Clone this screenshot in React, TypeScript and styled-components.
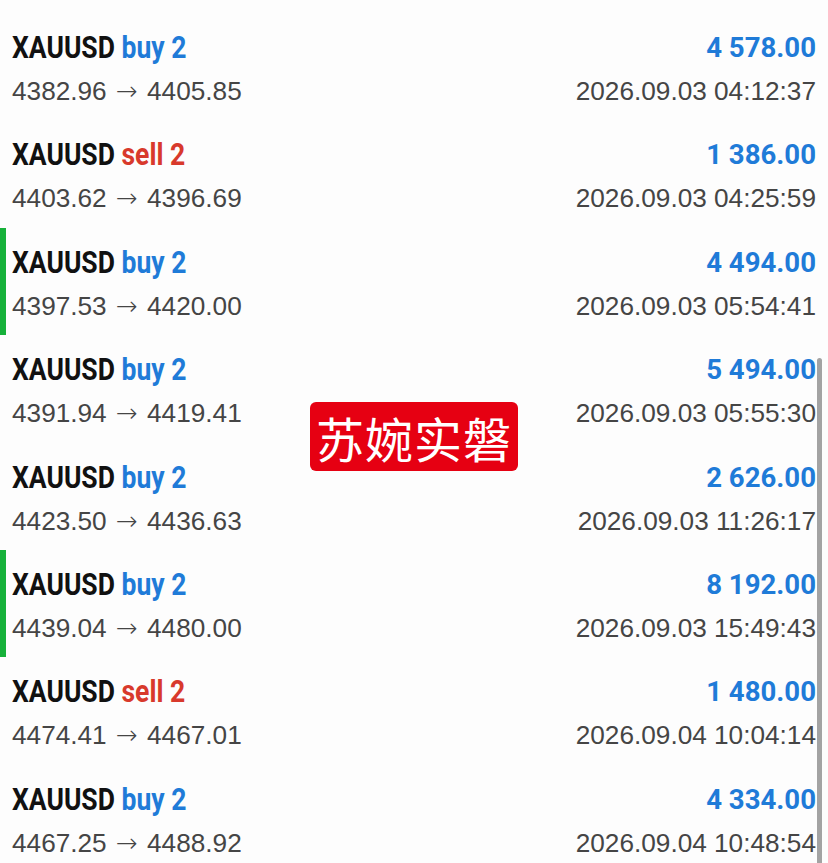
import React from "react";
import styled, { createGlobalStyle } from "styled-components";

const Global = createGlobalStyle`
  html, body { margin: 0; padding: 0; background: #ffffff; }
  body { font-family: "Liberation Sans", Arial, sans-serif; }
`;

const Page = styled.div`
  position: relative;
  width: 828px;
  height: 863px;
  overflow: hidden;
  background: #fdfdfd;
  padding-top: 13px;
  box-sizing: border-box;
`;

const Row = styled.div<{ $marked?: boolean }>`
  position: relative;
  height: 107.4px;
  display: flex;
  justify-content: space-between;
  padding: 15px 12px 0 6px;
  box-sizing: border-box;
  border-left: 6px solid ${(p) => (p.$marked ? "#16b13a" : "transparent")};
`;

const Col = styled.div<{ $right?: boolean }>`
  display: flex;
  flex-direction: column;
  align-items: ${(p) => (p.$right ? "flex-end" : "flex-start")};
`;

const Title = styled.div`
  display: inline-block;
  font-family: Roboto, sans-serif;
  font-weight: 700;
  font-size: 31px;
  line-height: 40px;
  color: #111111;
  white-space: nowrap;
  transform: scaleX(0.855);
  transform-origin: left center;
`;

const Side = styled.span<{ $sell?: boolean }>`
  color: ${(p) => (p.$sell ? "#d8392c" : "#1f7bd8")};
`;

const Amount = styled.div`
  font-family: Roboto, sans-serif;
  font-weight: 700;
  font-size: 27.6px;
  line-height: 40px;
  color: #1f7bd8;
  white-space: nowrap;
`;

const Sub = styled.div`
  font-family: "Liberation Sans", Arial, sans-serif;
  font-size: 26.2px;
  line-height: 47px;
  color: #454545;
  white-space: nowrap;
`;

const Arrow = styled.span`
  font-family: "DejaVu Sans Light", "DejaVu Sans", sans-serif;
  font-weight: 200;
  font-size: 26px;
  line-height: 1;
  margin: 0 2px;
  color: #454545;
`;

const Badge = styled.div`
  position: absolute;
  left: 310px;
  top: 402px;
  width: 208px;
  height: 69px;
  border-radius: 6px;
  background: #e60012;
  color: #ffffff;
  display: flex;
  align-items: center;
  justify-content: center;
  font-family: "Noto Sans CJK SC", sans-serif;
  font-size: 48px;
  font-weight: 400;
  letter-spacing: 1px;
`;

const Scrollbar = styled.div`
  position: absolute;
  left: 817px;
  top: 358px;
  width: 5px;
  height: 520px;
  border-radius: 3px;
  background: #a3a3a3;
`;

type Trade = {
  side: "buy" | "sell";
  open: string;
  close: string;
  profit: string;
  time: string;
  marked?: boolean;
};

const trades: Trade[] = [
  { side: "buy", open: "4382.96", close: "4405.85", profit: "4 578.00", time: "2026.09.03 04:12:37" },
  { side: "sell", open: "4403.62", close: "4396.69", profit: "1 386.00", time: "2026.09.03 04:25:59" },
  { side: "buy", open: "4397.53", close: "4420.00", profit: "4 494.00", time: "2026.09.03 05:54:41", marked: true },
  { side: "buy", open: "4391.94", close: "4419.41", profit: "5 494.00", time: "2026.09.03 05:55:30" },
  { side: "buy", open: "4423.50", close: "4436.63", profit: "2 626.00", time: "2026.09.03 11:26:17" },
  { side: "buy", open: "4439.04", close: "4480.00", profit: "8 192.00", time: "2026.09.03 15:49:43", marked: true },
  { side: "sell", open: "4474.41", close: "4467.01", profit: "1 480.00", time: "2026.09.04 10:04:14" },
  { side: "buy", open: "4467.25", close: "4488.92", profit: "4 334.00", time: "2026.09.04 10:48:54" },
];

export default function App() {
  return (
    <Page>
      <Global />
      {trades.map((t, i) => (
        <Row key={i} $marked={t.marked}>
          <Col>
            <Title>
              XAUUSD <Side $sell={t.side === "sell"}>{t.side} 2</Side>
            </Title>
            <Sub>
              {t.open} <Arrow>→</Arrow> {t.close}
            </Sub>
          </Col>
          <Col $right>
            <Amount>{t.profit}</Amount>
            <Sub>{t.time}</Sub>
          </Col>
        </Row>
      ))}
      <Badge>苏婉实磐</Badge>
      <Scrollbar />
    </Page>
  );
}
